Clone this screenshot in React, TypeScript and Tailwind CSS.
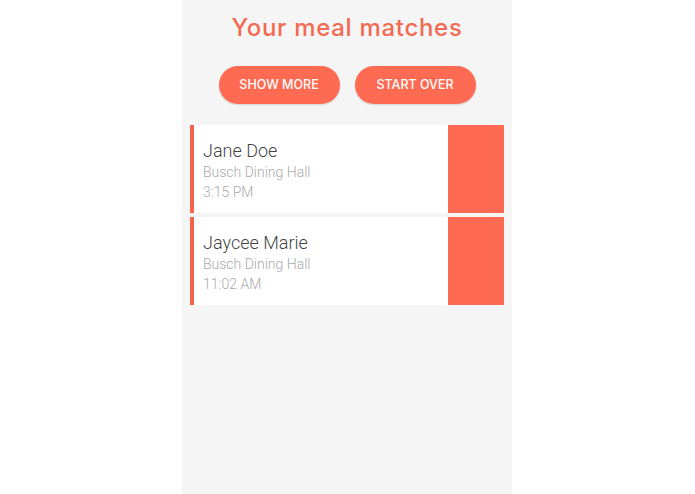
import React from "react";

const matches = [
  { name: "Jane Doe", place: "Busch Dining Hall", time: "3:15 PM" },
  { name: "Jaycee Marie", place: "Busch Dining Hall", time: "11:02 AM" },
];

export default function App() {
  return (
    <div className="w-full min-h-screen bg-white pr-px">
      <div className="mx-auto w-[330px] h-[494px] bg-[#f5f5f5] flex flex-col">
        <h1
          className="pt-[12px] text-center text-[24px] leading-[32px] font-medium tracking-[0.7px] text-[#f26a51]"
          style={{ fontFamily: "Inter, 'Open Sans', sans-serif" }}
        >
          Your meal matches
        </h1>
        <div className="mt-[22px] flex justify-center gap-[15px]">
          {["SHOW MORE", "START OVER"].map((t) => (
            <button
              key={t}
              className="w-[121px] h-[38px] pt-px rounded-full bg-[#ff6a52] text-white text-[12.5px] font-medium shadow-[0_1px_2px_rgba(0,0,0,0.15)]"
              style={{ fontFamily: "Inter, 'Open Sans', sans-serif" }}
            >
              {t}
            </button>
          ))}
        </div>
        <div className="mt-[21px] px-[8px] flex flex-col gap-[4px]">
          {matches.map((m) => (
            <div key={m.name} className="flex h-[88px] bg-white border-l-4 border-[#f4634c]">
              <div
                className="flex-1 pl-[9px] pt-[14px] font-light"
                style={{ fontFamily: "Roboto, sans-serif" }}
              >
                <div className="text-[18px] leading-[24px] text-[#444444]">{m.name}</div>
                <div className="text-[14px] leading-[19px] text-[#aaaaaa]">{m.place}</div>
                <div className="text-[14px] leading-[20px] text-[#aaaaaa]">{m.time}</div>
              </div>
              <div className="w-[56px] bg-[#ff6a52]" />
            </div>
          ))}
        </div>
      </div>
    </div>
  );
}
